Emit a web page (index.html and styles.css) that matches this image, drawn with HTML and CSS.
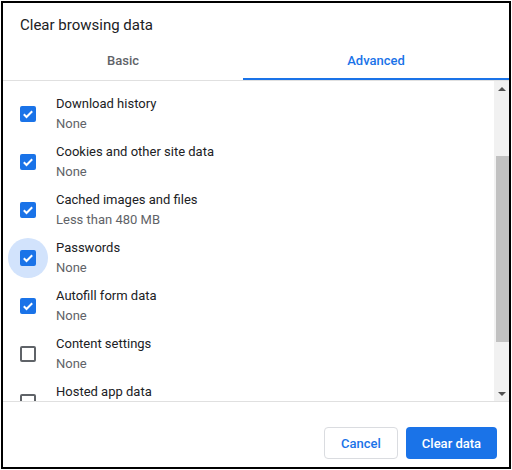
FILE: index.html
```html
<!DOCTYPE html>
<html lang="en">
<head>
    <meta charset="UTF-8">
    <title>Clear browsing data</title>
<link rel="stylesheet" href="styles.css">
</head>
<body>
    <div class="dialog">
        <div class="dialogTitle">Clear browsing data</div>

        <div class="tabs">
            <div class="tab">Basic</div>
            <div class="tab selected">Advanced</div>
        </div>

        <div class="body">
            <div class="list">
                <div class="row">
                    <span class="checkBox checked"><svg viewBox="0 0 16 16"><path d="M3.8 8.3l2.7 2.7 5.7-5.7"/></svg></span>
                    <div class="rowText"><div class="label">Download history</div><div class="subLabel">None</div></div>
                </div>
                <div class="row">
                    <span class="checkBox checked"><svg viewBox="0 0 16 16"><path d="M3.8 8.3l2.7 2.7 5.7-5.7"/></svg></span>
                    <div class="rowText"><div class="label">Cookies and other site data</div><div class="subLabel">None</div></div>
                </div>
                <div class="row">
                    <span class="checkBox checked"><svg viewBox="0 0 16 16"><path d="M3.8 8.3l2.7 2.7 5.7-5.7"/></svg></span>
                    <div class="rowText"><div class="label">Cached images and files</div><div class="subLabel">Less than 480 MB</div></div>
                </div>
                <div class="row">
                    <span class="checkBox checked focused"><svg viewBox="0 0 16 16"><path d="M3.8 8.3l2.7 2.7 5.7-5.7"/></svg></span>
                    <div class="rowText"><div class="label">Passwords</div><div class="subLabel">None</div></div>
                </div>
                <div class="row">
                    <span class="checkBox checked"><svg viewBox="0 0 16 16"><path d="M3.8 8.3l2.7 2.7 5.7-5.7"/></svg></span>
                    <div class="rowText"><div class="label">Autofill form data</div><div class="subLabel">None</div></div>
                </div>
                <div class="row">
                    <span class="checkBox"></span>
                    <div class="rowText"><div class="label">Content settings</div><div class="subLabel">None</div></div>
                </div>
                <div class="row">
                    <span class="checkBox"></span>
                    <div class="rowText"><div class="label">Hosted app data</div><div class="subLabel">None</div></div>
                </div>
            </div>

            <div class="scrollBar">
                <div class="arrow up"></div>
                <div class="track"><div class="thumb"></div></div>
                <div class="arrow down"></div>
            </div>
        </div>

        <div class="buttons">
            <button class="btn cancel">Cancel</button>
            <button class="btn action">Clear data</button>
        </div>
    </div>
</body>
</html>
```

FILE: styles.css
```css
/* Clear browsing data dialog */
body {
  font-family: Roboto, "Liberation Sans", Arial, sans-serif;
  margin: 0;
  padding: 1px;
  background: #fff;
}

.dialog {
  width: 510px;
  height: 468px;
  box-sizing: border-box;
  border: 2px solid #000;
  display: flex;
  flex-direction: column;
  background: #fff;
}

.dialogTitle {
  height: 41px;
  padding: 0 17px;
  font-size: 15px;
  line-height: 45px;
  color: #202124;
}

.tabs {
  display: flex;
  height: 36px;
  border-bottom: 1px solid #e0e0e0;
}

.tab {
  flex: 1;
  text-align: center;
  font-size: 13px;
  font-weight: 500;
  line-height: 34px;
  color: #5f6368;
  border-bottom: 2px solid transparent;
}

.tab:first-child {
  flex: none;
  width: 240px;
}

.tab.selected {
  color: #1a73e8;
  border-bottom-color: #1a73e8;
}

.body {
  display: flex;
  height: 320px;
  border-bottom: 1px solid #e0e0e0;
}

.list {
  flex: 1;
  overflow: hidden;
  padding-top: 8px;
  isolation: isolate;
}

.row {
  display: flex;
  align-items: center;
  height: 48px;
  padding-left: 17px;
}

.checkBox {
  position: relative;
  width: 16px;
  height: 16px;
  box-sizing: border-box;
  border: 2px solid #5f6368;
  border-radius: 2px;
  margin: 2px 20px 0 0;
  flex-shrink: 0;
}

.checkBox.checked {
  background: #1a73e8;
  border-color: #1a73e8;
}

.checkBox svg {
  position: absolute;
  left: -2px;
  top: -2px;
  width: 16px;
  height: 16px;
  fill: none;
  stroke: #fff;
  stroke-width: 2;
}

/* focus ripple behind the checkbox */
.checkBox.focused::before {
  content: "";
  position: absolute;
  left: -14px;
  top: -14px;
  width: 40px;
  height: 40px;
  border-radius: 50%;
  background: #d2e3fc;
  z-index: -1;
}

.rowText {
  font-size: 13px;
  line-height: 20px;
  padding-top: 2px;
}

.label {
  color: #202124;
}

.subLabel {
  color: #5f6368;
}

.scrollBar {
  width: 15px;
  display: flex;
  flex-direction: column;
  background: #f1f1f1;
}

.arrow {
  height: 15px;
  display: flex;
  align-items: center;
  justify-content: center;
}

.arrow::before {
  content: "";
  border-left: 4px solid transparent;
  border-right: 4px solid transparent;
}

.arrow.up::before {
  border-bottom: 4px solid #505050;
}

.arrow.down::before {
  border-top: 4px solid #505050;
}

.track {
  flex: 1;
  padding: 60px 0 0 2px;
}

.thumb {
  height: 186px;
  background: #c1c1c1;
}

.buttons {
  flex: 1;
  display: flex;
  justify-content: flex-end;
  gap: 8px;
  padding: 25px 12px 0 0;
}

.btn {
  height: 32px;
  padding: 0;
  border-radius: 4px;
  font-family: inherit;
  font-size: 13px;
  font-weight: 500;
  white-space: nowrap;
  cursor: pointer;
}

.cancel {
  background: #fff;
  color: #1a73e8;
  border: 1px solid #dadce0;
  width: 74px;
}

.action {
  background: #1a73e8;
  color: #fff;
  border: none;
  width: 91px;
}
```
